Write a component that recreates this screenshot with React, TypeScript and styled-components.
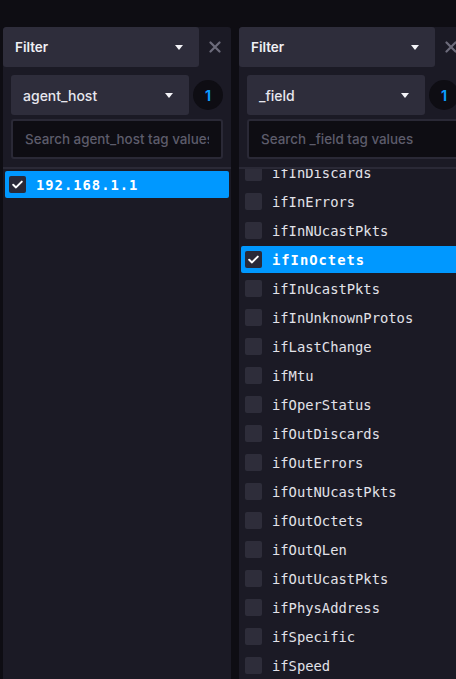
import React, { useLayoutEffect, useRef } from 'react';
import styled, { createGlobalStyle } from 'styled-components';

const GlobalStyle = createGlobalStyle`
  html, body {
    margin: 0;
    background: #0e0d13;
    overflow: hidden;
  }
  * { box-sizing: border-box; }
`;

const Page = styled.div`
  display: flex;
  gap: 8px;
  height: 679px;
  padding: 27px 0 0 3px;
  overflow: hidden;
  font-family: Inter, "Noto Sans", sans-serif;
`;

const Panel = styled.div`
  width: 228px;
  flex-shrink: 0;
  display: flex;
  flex-direction: column;
  background: #1b1a25;
  border-radius: 3px 3px 0 0;
  overflow: hidden;
`;

const PanelHeader = styled.div`
  display: flex;
  height: 40px;
  flex-shrink: 0;
`;

const Select = styled.div<{ $width?: number }>`
  ${({ $width }) => ($width ? `width: ${$width}px;` : 'flex: 1;')}
  height: 40px;
  display: flex;
  align-items: center;
  justify-content: space-between;
  padding: 0 16px 0 12px;
  background: #2e2d3b;
  border-radius: 3px;
  color: #f0f0f5;
  font-size: 13.5px;
  font-weight: 600;
`;

const TagSelect = styled(Select)`
  font-weight: 500;
  font-size: 14px;
  color: #e7e7ee;
`;

const Caret = styled.span`
  width: 0;
  height: 0;
  border-left: 4.5px solid transparent;
  border-right: 4.5px solid transparent;
  border-top: 5px solid #f4f4f8;
`;

const CloseButton = styled.div`
  width: 32px;
  display: flex;
  align-items: center;
  justify-content: center;
  color: #6c6b7a;
`;

const Controls = styled.div`
  display: flex;
  flex-direction: column;
  gap: 4px;
  padding: 8px;
  flex-shrink: 0;
`;

const TagRow = styled.div`
  display: flex;
  align-items: center;
  gap: 4px;
`;

const Badge = styled.div`
  width: 30px;
  height: 30px;
  border-radius: 50%;
  background: #0e0d13;
  color: #0b9bff;
  display: flex;
  align-items: center;
  justify-content: center;
  font-weight: 700;
  font-size: 14px;
`;

const Search = styled.input`
  height: 40px;
  width: 100%;
  background: #0e0d13;
  border: 2px solid #2a2936;
  border-radius: 3px;
  padding: 0 12px;
  color: #e7e7ee;
  font-family: Inter, "Noto Sans", sans-serif;
  font-size: 13.4px;
  font-weight: 500;
  outline: none;
  &::placeholder {
    color: #5d5c6b;
  }
`;

const Divider = styled.div`
  height: 2px;
  background: #2a2936;
  flex-shrink: 0;
`;

const List = styled.div`
  flex: 1;
  overflow: hidden;
  padding: 2px;
`;

const Row = styled.div<{ $selected?: boolean }>`
  height: 27px;
  margin-bottom: 2px;
  display: flex;
  align-items: center;
  gap: 10px;
  padding: 0 4px;
  border-radius: 2px;
  background: ${({ $selected }) => ($selected ? '#0098ff' : 'transparent')};
  color: ${({ $selected }) => ($selected ? '#ffffff' : '#e2e2e9')};
  font-family: "DejaVu Sans Mono", "Liberation Mono", monospace;
  font-size: 13.8px;
  font-weight: ${({ $selected }) => ($selected ? 700 : 400)};
  letter-spacing: ${({ $selected }) => ($selected ? '1px' : '0')};
  white-space: nowrap;
`;

const Box = styled.span<{ $checked?: boolean }>`
  width: 17px;
  height: 17px;
  flex-shrink: 0;
  border-radius: 2px;
  background: ${({ $checked }) => ($checked ? '#2a2937' : '#2e2d3a')};
  display: flex;
  align-items: center;
  justify-content: center;
`;

const Check = () => (
  <svg width="13" height="13" viewBox="0 0 13 13">
    <path d="M2.2 6.8 L5 9.4 L10.8 3.6" fill="none" stroke="#fff" strokeWidth="2" strokeLinecap="round" strokeLinejoin="round" />
  </svg>
);

const CloseIcon = () => (
  <svg width="12" height="12" viewBox="0 0 12 12">
    <path d="M1.5 1.5 L10.5 10.5 M10.5 1.5 L1.5 10.5" stroke="currentColor" strokeWidth="2.2" strokeLinecap="round" />
  </svg>
);

interface Item {
  name: string;
  selected?: boolean;
}

interface FilterPanelProps {
  tag: string;
  items: Item[];
  scroll?: number;
}

const FilterPanel = ({ tag, items, scroll = 0 }: FilterPanelProps) => {
  const listRef = useRef<HTMLDivElement>(null);

  useLayoutEffect(() => {
    if (listRef.current) listRef.current.scrollTop = scroll;
  }, [scroll]);

  return (
    <Panel>
      <PanelHeader>
        <Select>
          Filter
          <Caret />
        </Select>
        <CloseButton>
          <CloseIcon />
        </CloseButton>
      </PanelHeader>
      <Controls>
        <TagRow>
          <TagSelect $width={178}>
            {tag}
            <Caret />
          </TagSelect>
          <Badge>1</Badge>
        </TagRow>
        <Search placeholder={`Search ${tag} tag values`} />
      </Controls>
      <Divider />
      <List ref={listRef}>
        {items.map(item => (
          <Row key={item.name} $selected={item.selected}>
            <Box $checked={item.selected}>{item.selected && <Check />}</Box>
            {item.name}
          </Row>
        ))}
      </List>
    </Panel>
  );
};

const hosts: Item[] = [{ name: '192.168.1.1', selected: true }];

const fields: Item[] = [
  'ifAdminStatus',
  'ifDescr',
  'ifInDiscards',
  'ifInErrors',
  'ifInNUcastPkts',
  'ifInOctets',
  'ifInUcastPkts',
  'ifInUnknownProtos',
  'ifLastChange',
  'ifMtu',
  'ifOperStatus',
  'ifOutDiscards',
  'ifOutErrors',
  'ifOutNUcastPkts',
  'ifOutOctets',
  'ifOutQLen',
  'ifOutUcastPkts',
  'ifPhysAddress',
  'ifSpecific',
  'ifSpeed',
  'ifType',
].map(name => ({ name, selected: name === 'ifInOctets' }));

export default function App() {
  return (
    <>
      <GlobalStyle />
      <Page>
        <FilterPanel tag="agent_host" items={hosts} />
        <FilterPanel tag="_field" items={fields} scroll={70} />
      </Page>
    </>
  );
}
